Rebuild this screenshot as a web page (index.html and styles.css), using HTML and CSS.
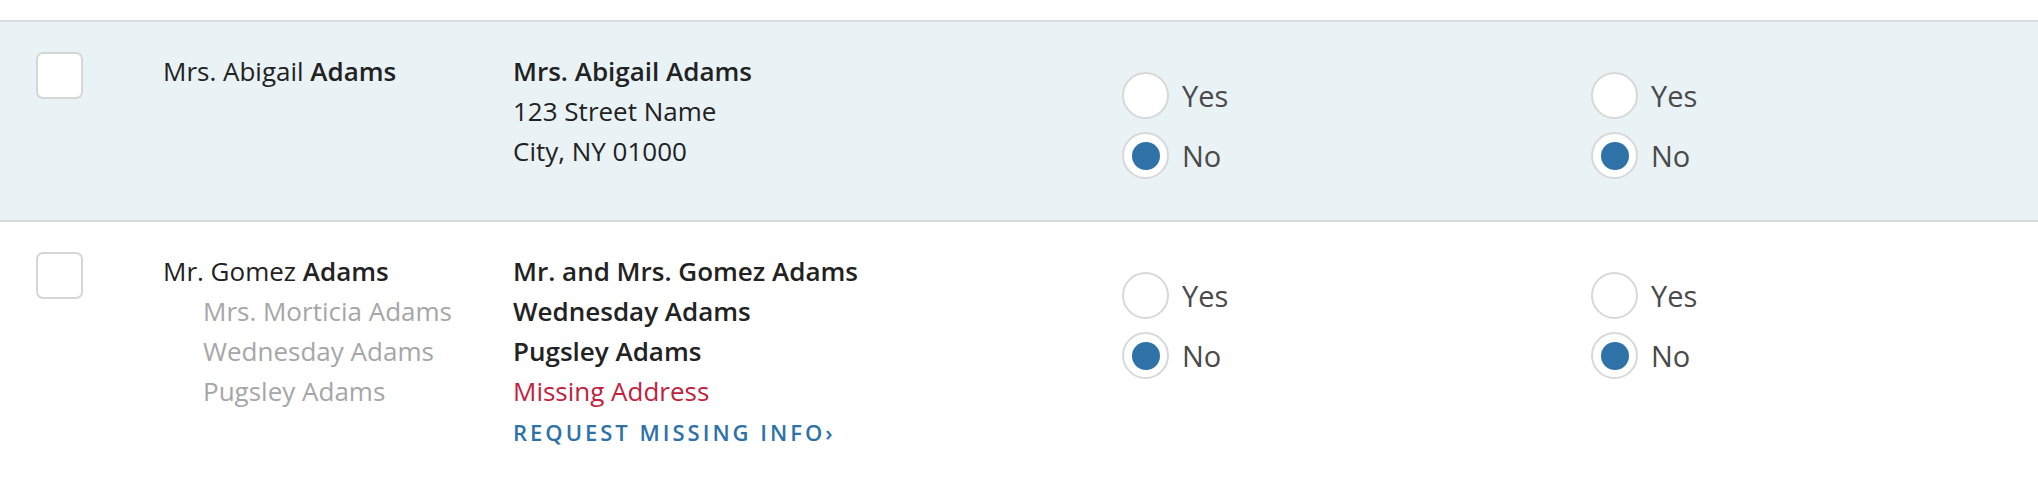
FILE: index.html
```html
<!DOCTYPE html>
<html>
<head>
<meta charset="utf-8">
<link rel="stylesheet" href="styles.css">
</head>
<body>
<div class="table">
  <div class="row selected">
    <div class="cell check"><span class="checkbox"></span></div>
    <div class="cell name">
      <div class="line">Mrs. Abigail <b>Adams</b></div>
    </div>
    <div class="cell addr">
      <div class="line strong">Mrs. Abigail Adams</div>
      <div class="line">123 Street Name</div>
      <div class="line">City, NY 01000</div>
    </div>
    <div class="cell opt">
      <div class="radio"><span class="dot"></span><span class="lbl">Yes</span></div>
      <div class="radio on"><span class="dot"></span><span class="lbl">No</span></div>
    </div>
    <div class="cell opt">
      <div class="radio"><span class="dot"></span><span class="lbl">Yes</span></div>
      <div class="radio on"><span class="dot"></span><span class="lbl">No</span></div>
    </div>
  </div>
  <div class="row">
    <div class="cell check"><span class="checkbox"></span></div>
    <div class="cell name">
      <div class="line">Mr. Gomez <b>Adams</b></div>
      <div class="line sub">Mrs. Morticia Adams</div>
      <div class="line sub">Wednesday Adams</div>
      <div class="line sub">Pugsley Adams</div>
    </div>
    <div class="cell addr">
      <div class="line strong">Mr. and Mrs. Gomez Adams</div>
      <div class="line strong">Wednesday Adams</div>
      <div class="line strong">Pugsley Adams</div>
      <div class="line missing">Missing Address</div>
      <div class="line"><a class="request" href="#">REQUEST MISSING INFO›</a></div>
    </div>
    <div class="cell opt">
      <div class="radio"><span class="dot"></span><span class="lbl">Yes</span></div>
      <div class="radio on"><span class="dot"></span><span class="lbl">No</span></div>
    </div>
    <div class="cell opt">
      <div class="radio"><span class="dot"></span><span class="lbl">Yes</span></div>
      <div class="radio on"><span class="dot"></span><span class="lbl">No</span></div>
    </div>
  </div>
</div>
</body>
</html>
```
FILE: styles.css
```css
html, body {
  margin: 0;
  padding: 0;
  background: #ffffff;
}
body {
  padding-top: 20px;
  font-family: "Open Sans", "Liberation Sans", sans-serif;
  font-size: 26px;
  color: #222222;
}
.table {
  border-top: 2px solid #d9dadb;
}
.row {
  display: grid;
  grid-template-columns: 163px 350px 609px 469px 1fr;
  min-height: 200px;
  box-sizing: border-box;
  padding: 29px 0 40px;
  border-bottom: 2px solid #d9dadb;
}
.row.selected {
  background: #e9f2f5;
}
.check {
  padding-left: 36px;
  padding-top: 1px;
}
.checkbox {
  display: block;
  width: 47px;
  height: 47px;
  box-sizing: border-box;
  border: 2px solid #d6d6d6;
  border-radius: 7px;
  background: #ffffff;
}
.line {
  line-height: 40px;
  white-space: nowrap;
}
.line b, .strong {
  font-weight: 600;
}
.sub {
  padding-left: 40px;
  color: #a6a6a6;
}
.missing {
  color: #c1223d;
}
.request {
  color: #2d72a8;
  text-decoration: none;
  font-weight: 600;
  font-size: 22px;
  letter-spacing: 3px;
}
.opt {
  display: flex;
  flex-direction: column;
  gap: 13px;
  padding-top: 21px;
}
.radio {
  display: flex;
  align-items: center;
  gap: 13px;
  color: #4a4a4a;
  font-size: 29px;
}
.dot {
  width: 47px;
  height: 47px;
  box-sizing: border-box;
  border: 2px solid #d8d8d8;
  border-radius: 50%;
  background: #ffffff;
  display: flex;
  align-items: center;
  justify-content: center;
}
.radio.on .dot::after {
  content: "";
  width: 28px;
  height: 28px;
  border-radius: 50%;
  background: #2e72a8;
}
```
